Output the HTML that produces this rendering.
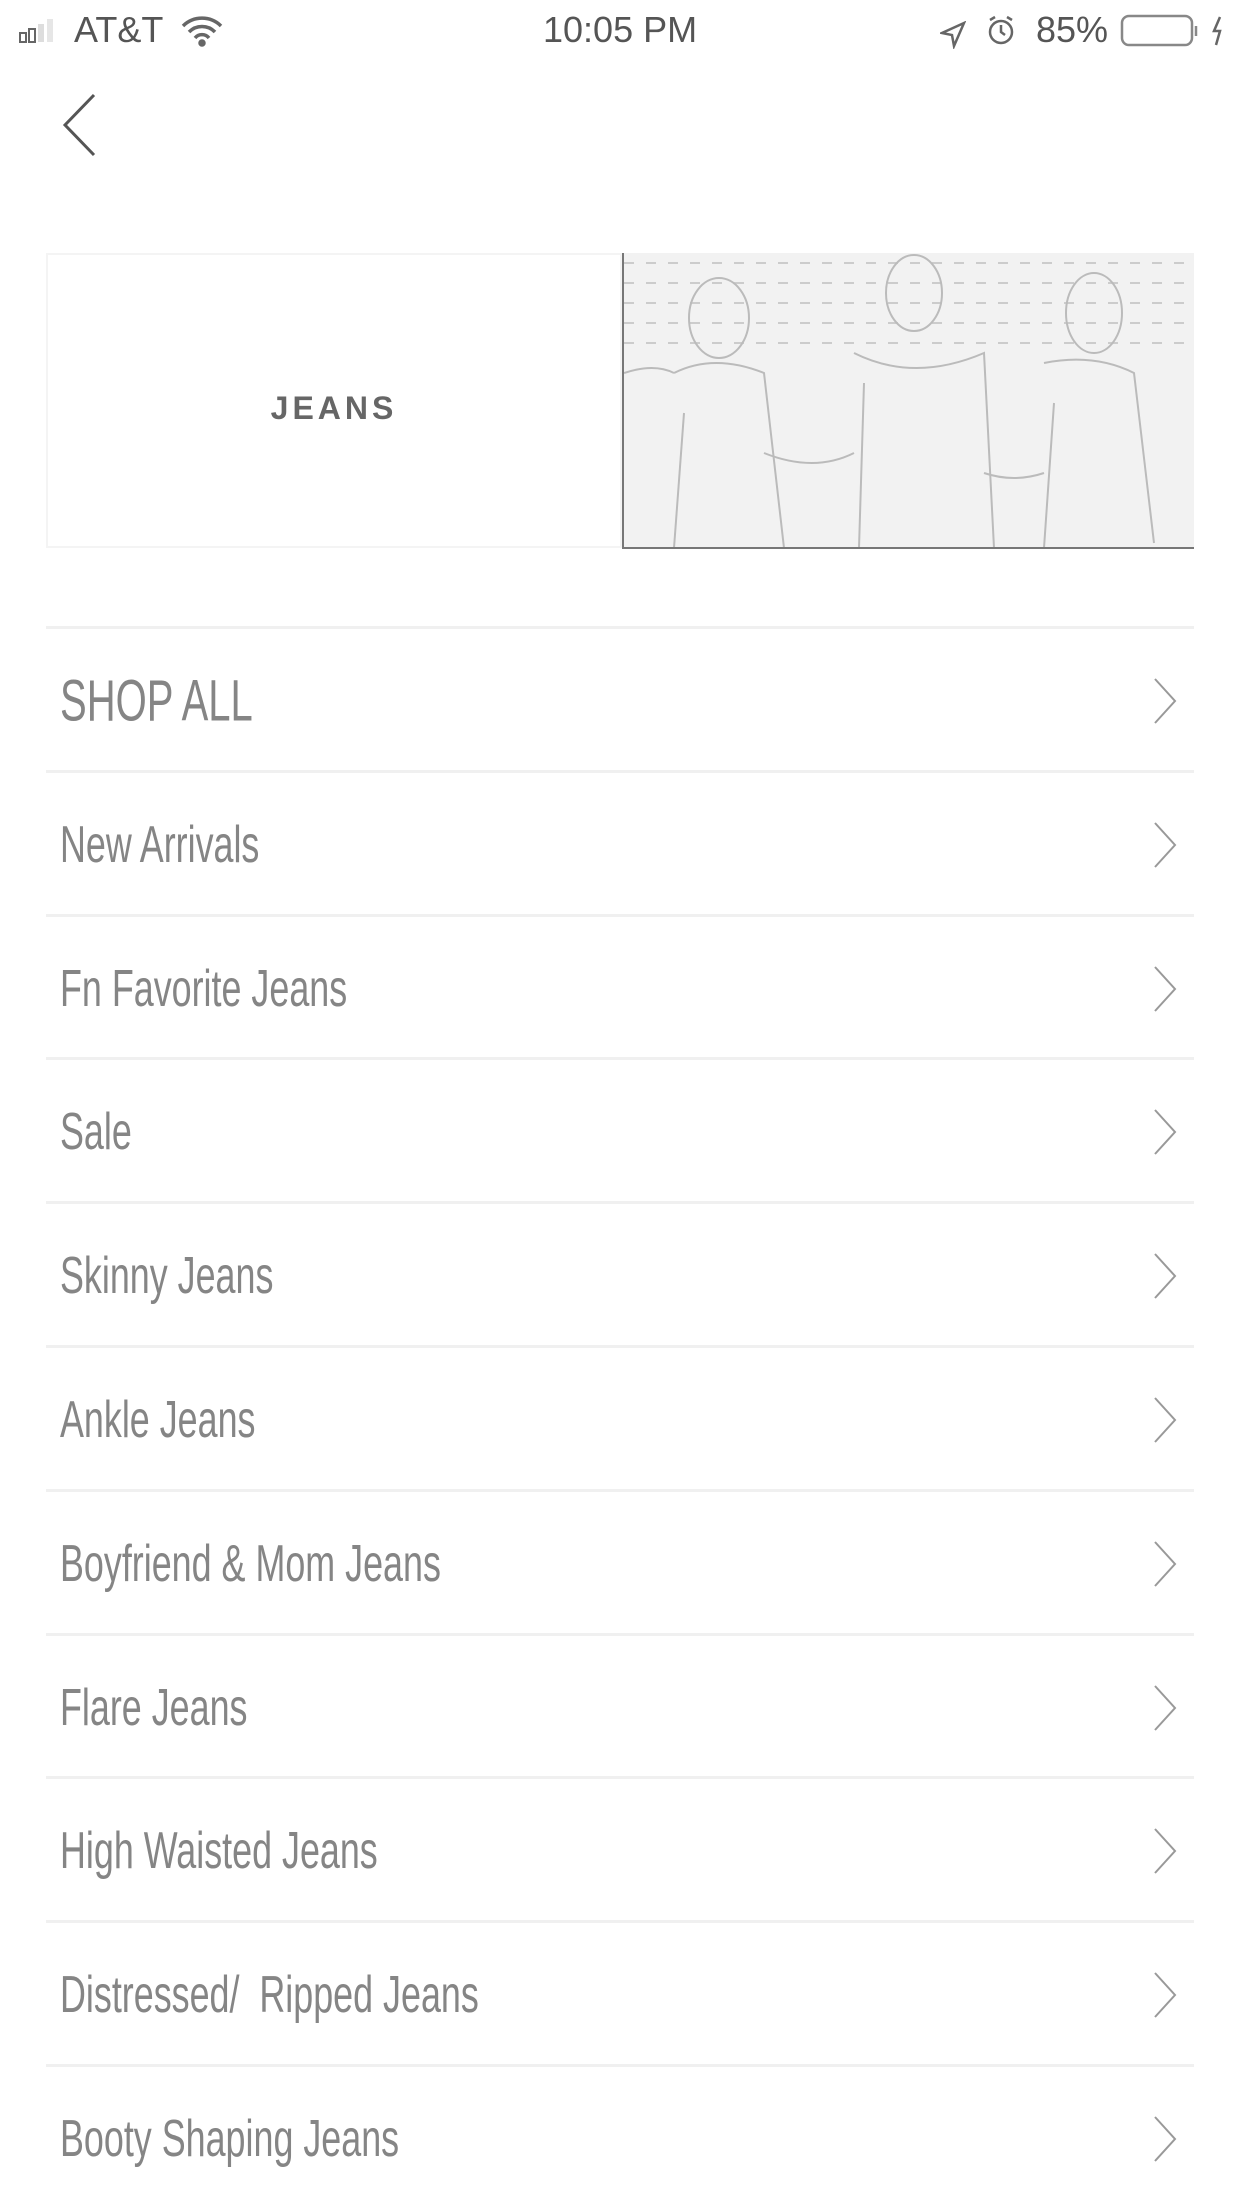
<!DOCTYPE html>
<html><head><meta charset="utf-8"><style>
body{margin:0;width:1242px;height:2208px;background:#fff;font-family:"Liberation Sans",sans-serif;position:relative;overflow:hidden}
.sb{position:absolute;top:9px;font-size:36px;color:#555}
.row{position:absolute;left:46px;width:1148px;height:144px;border-top:3px solid #f0f0f0}
.row span{position:absolute;left:14px;top:50%;transform:translateY(-50%) scaleX(0.69);transform-origin:left center;font-size:52px;color:#858585;white-space:nowrap}
.row svg{position:absolute;right:16px;top:50%;margin-top:-24px}
</style></head><body>
<div class="sb" style="left:18px;top:12px"><svg width="50" height="30" viewBox="0 0 50 30"><rect x="2" y="18" width="6" height="9" fill="none" stroke="#666" stroke-width="2"/><rect x="11" y="14" width="6" height="13" fill="none" stroke="#666" stroke-width="2"/><rect x="20" y="9" width="6" height="18" fill="#ddd"/><rect x="29" y="4" width="6" height="23" fill="#e6e6e6"/></svg></div>
<div class="sb" style="left:74px">AT&amp;T</div>
<div class="sb" style="left:180px;top:14px"><svg width="44" height="32" viewBox="0 0 44 32" fill="none" stroke="#666" stroke-width="3.5"><path d="M3 11a27 27 0 0 1 38 0M9 17a18 18 0 0 1 26 0M15 23a9 9 0 0 1 14 0"/><circle cx="22" cy="28" r="2" fill="#666"/></svg></div>
<div class="sb" style="left:543px">10:05 PM</div>
<div class="sb" style="left:940px;top:16px"><svg width="26" height="28" viewBox="0 0 26 28" fill="none" stroke="#666" stroke-width="2.5"><path d="M24 2L2 12l10 2 2 11z"/></svg></div>
<div class="sb" style="left:986px;top:14px"><svg width="30" height="32" viewBox="0 0 30 32" fill="none" stroke="#666" stroke-width="2.5"><circle cx="15" cy="17" r="11"/><path d="M15 10v7l4 3M4 5l5-3M26 5l-5-3"/></svg></div>
<div class="sb" style="left:1036px">85%</div>
<div class="sb" style="left:1120px;top:14px"><svg width="110" height="34" viewBox="0 0 110 34" fill="none" stroke="#888" stroke-width="2.5"><rect x="2" y="2" width="70" height="29" rx="7"/><path d="M76 12v10"/><path d="M100 3l-6 14h6l-4 14" stroke="#666"/></svg></div>
<svg style="position:absolute;left:60px;top:92px" width="40" height="66" viewBox="0 0 40 66" fill="none" stroke="#555" stroke-width="3"><path d="M34 3L5 33l29 30"/></svg>
<div style="position:absolute;left:46px;top:253px;width:576px;height:295px;border:2px solid #f4f4f4;box-sizing:border-box"></div>
<div style="position:absolute;left:46px;top:390px;width:576px;text-align:center;font-size:32px;letter-spacing:4px;color:#666;font-weight:bold">JEANS</div>
<div style="position:absolute;left:622px;top:253px;width:572px;height:296px;border-left:2px solid #777;border-bottom:2px solid #777;box-sizing:border-box;background:#f2f2f2;overflow:hidden">
<svg width="572" height="295" viewBox="0 0 572 295" fill="none" stroke="#bbb" stroke-width="2">
<g stroke="#ccc" stroke-width="2"><path d="M0 10h572M0 30h572M0 50h572M0 70h572M0 90h572" stroke-dasharray="10 12"/></g>
<ellipse cx="95" cy="65" rx="30" ry="40"/><ellipse cx="290" cy="40" rx="28" ry="38"/><ellipse cx="470" cy="60" rx="28" ry="40"/>
<path d="M50 120q40-20 90 0l20 175M230 100q60 30 130 0l10 195M420 110q50-10 90 10l20 170M60 160l-10 135M240 130l-5 165M430 150l-10 145"/>
<path d="M0 120q30-10 50 0M140 200q50 20 90 0M360 220q30 10 60 0"/>
</svg></div>
<div class="row" style="top:626px"><span style="font-size:58px">SHOP ALL</span><svg width="26" height="48" viewBox="0 0 26 48" fill="none" stroke="#999" stroke-width="2"><path d="M3 2l20 22-20 22"/></svg></div>
<div class="row" style="top:770px"><span>New Arrivals</span><svg width="26" height="48" viewBox="0 0 26 48" fill="none" stroke="#999" stroke-width="2"><path d="M3 2l20 22-20 22"/></svg></div>
<div class="row" style="top:914px"><span>Fn Favorite Jeans</span><svg width="26" height="48" viewBox="0 0 26 48" fill="none" stroke="#999" stroke-width="2"><path d="M3 2l20 22-20 22"/></svg></div>
<div class="row" style="top:1057px"><span>Sale</span><svg width="26" height="48" viewBox="0 0 26 48" fill="none" stroke="#999" stroke-width="2"><path d="M3 2l20 22-20 22"/></svg></div>
<div class="row" style="top:1201px"><span>Skinny Jeans</span><svg width="26" height="48" viewBox="0 0 26 48" fill="none" stroke="#999" stroke-width="2"><path d="M3 2l20 22-20 22"/></svg></div>
<div class="row" style="top:1345px"><span>Ankle Jeans</span><svg width="26" height="48" viewBox="0 0 26 48" fill="none" stroke="#999" stroke-width="2"><path d="M3 2l20 22-20 22"/></svg></div>
<div class="row" style="top:1489px"><span>Boyfriend &amp; Mom Jeans</span><svg width="26" height="48" viewBox="0 0 26 48" fill="none" stroke="#999" stroke-width="2"><path d="M3 2l20 22-20 22"/></svg></div>
<div class="row" style="top:1633px"><span>Flare Jeans</span><svg width="26" height="48" viewBox="0 0 26 48" fill="none" stroke="#999" stroke-width="2"><path d="M3 2l20 22-20 22"/></svg></div>
<div class="row" style="top:1776px"><span>High Waisted Jeans</span><svg width="26" height="48" viewBox="0 0 26 48" fill="none" stroke="#999" stroke-width="2"><path d="M3 2l20 22-20 22"/></svg></div>
<div class="row" style="top:1920px"><span>Distressed/&nbsp; Ripped Jeans</span><svg width="26" height="48" viewBox="0 0 26 48" fill="none" stroke="#999" stroke-width="2"><path d="M3 2l20 22-20 22"/></svg></div>
<div class="row" style="top:2064px"><span>Booty Shaping Jeans</span><svg width="26" height="48" viewBox="0 0 26 48" fill="none" stroke="#999" stroke-width="2"><path d="M3 2l20 22-20 22"/></svg></div>
</body></html>
